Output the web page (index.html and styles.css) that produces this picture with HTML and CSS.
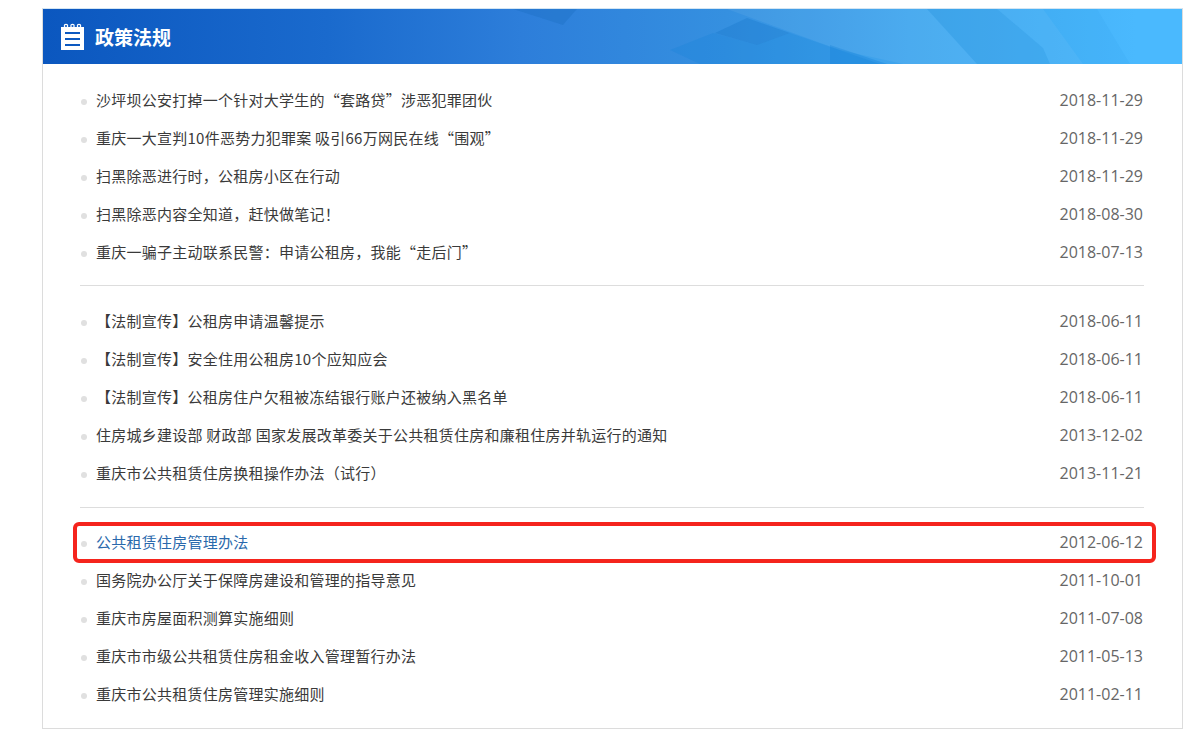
FILE: index.html
```html
<!DOCTYPE html>
<html lang="zh-CN">
<head>
<meta charset="utf-8">
<title>政策法规</title>
<link rel="stylesheet" href="styles.css">
</head>
<body>
<section class="panel">
  <header class="panel-head">
    <svg class="head-art" viewBox="0 0 1139 55" aria-hidden="true">
      <polygon points="470,0 534,0 520,16" fill="#1a6cc0" opacity=".35"/>
      <polygon points="684,0 1000,0 1040,55 860,55 797,41" fill="#ffffff" opacity=".06"/>
      <polygon points="704,9 672,24 714,36 747,24" fill="#0f6fc4" opacity=".28"/>
      <polygon points="627,41 670,24 714,36 747,24 837,55 657,55" fill="#0f7fd8" opacity=".22"/>
      <polygon points="787,36 844,55 787,55" fill="#0f7fd8" opacity=".3"/>
      <polygon points="884,0 954,0 1000,39 1007,55 934,55" fill="#1e8fdc" opacity=".3"/>
      <polygon points="954,0 1054,0 1087,55 1007,55 1000,39" fill="#2a9ae6" opacity=".12"/>
    </svg>
    <svg class="head-icon" viewBox="0 0 23 27" aria-hidden="true">
      <path class="icon-sheet" fill-rule="evenodd" d="M0 4h23v23H0zM4 9v2h15V9zm0 6v2h15v-2zm0 6v2h15v-2z"/>
      <circle class="icon-ring" cx="5" cy="3" r="1.7"/>
      <circle class="icon-ring" cx="11.5" cy="3" r="1.7"/>
      <circle class="icon-ring" cx="18" cy="3" r="1.7"/>
    </svg>
    <h2 class="head-title">政策法规</h2>
  </header>
  <div class="panel-body">
    <ul class="news-group">
      <li class="news-row"><a class="news-title">沙坪坝公安打掉一个针对大学生的“套路贷”涉恶犯罪团伙</a><span class="news-date">2018-11-29</span></li>
      <li class="news-row"><a class="news-title">重庆一大宣判10件恶势力犯罪案 吸引66万网民在线“围观”</a><span class="news-date">2018-11-29</span></li>
      <li class="news-row"><a class="news-title">扫黑除恶进行时，公租房小区在行动</a><span class="news-date">2018-11-29</span></li>
      <li class="news-row"><a class="news-title">扫黑除恶内容全知道，赶快做笔记！</a><span class="news-date">2018-08-30</span></li>
      <li class="news-row"><a class="news-title">重庆一骗子主动联系民警：申请公租房，我能“走后门”</a><span class="news-date">2018-07-13</span></li>
    </ul>
    <ul class="news-group">
      <li class="news-row"><a class="news-title">【法制宣传】公租房申请温馨提示</a><span class="news-date">2018-06-11</span></li>
      <li class="news-row"><a class="news-title">【法制宣传】安全住用公租房10个应知应会</a><span class="news-date">2018-06-11</span></li>
      <li class="news-row"><a class="news-title">【法制宣传】公租房住户欠租被冻结银行账户还被纳入黑名单</a><span class="news-date">2018-06-11</span></li>
      <li class="news-row"><a class="news-title">住房城乡建设部 财政部 国家发展改革委关于公共租赁住房和廉租住房并轨运行的通知</a><span class="news-date">2013-12-02</span></li>
      <li class="news-row"><a class="news-title">重庆市公共租赁住房换租操作办法（试行）</a><span class="news-date">2013-11-21</span></li>
    </ul>
    <ul class="news-group">
      <li class="news-row is-marked"><a class="news-title is-active">公共租赁住房管理办法</a><span class="news-date">2012-06-12</span></li>
      <li class="news-row"><a class="news-title">国务院办公厅关于保障房建设和管理的指导意见</a><span class="news-date">2011-10-01</span></li>
      <li class="news-row"><a class="news-title">重庆市房屋面积测算实施细则</a><span class="news-date">2011-07-08</span></li>
      <li class="news-row"><a class="news-title">重庆市市级公共租赁住房租金收入管理暂行办法</a><span class="news-date">2011-05-13</span></li>
      <li class="news-row"><a class="news-title">重庆市公共租赁住房管理实施细则</a><span class="news-date">2011-02-11</span></li>
    </ul>
  </div>
</section>
</body>
</html>
```
FILE: styles.css
```css
*, *::before, *::after { box-sizing: border-box; }
html, body { margin: 0; padding: 0; background: #fff; }
body {
  padding: 8px 17px 0 42px;
  font-family: "Noto Sans CJK SC", "Noto Sans", sans-serif;
  color: #333;
}
.panel {
  width: 1141px;
  height: 721px;
  border: 1px solid #dcdcdc;
  border-top-color: #d3e5f3;
  display: flex;
  flex-direction: column;
}
.panel-head {
  position: relative;
  height: 55px;
  flex: none;
  padding-left: 18px;
  display: flex;
  align-items: center;
  gap: 11px;
  overflow: hidden;
  background: linear-gradient(90deg, #0b57bf 0%, #1a6acd 25%, #2d7eda 42%, #3590e0 60%, #40a6ee 76%, #4ab9fe 96%);
}
.head-art { position: absolute; inset: 0; width: 100%; height: 100%; }
.head-icon { position: relative; width: 23px; height: 27px; flex: none; margin-top: -1px; }
.icon-sheet { fill: #fff; }
.icon-ring { fill: none; stroke: #fff; stroke-width: 1.2; }
.head-title {
  position: relative;
  margin: 0;
  font-size: 19px;
  font-weight: 700;
  line-height: 26px;
  color: #fff;
}
.panel-body {
  padding: 16px 38px 0 37px;
  display: flex;
  flex-direction: column;
}
.news-group {
  list-style: none;
  margin: 0 0 15px;
  padding: 0 0 15px;
  border-bottom: 1px solid #dddddd;
}
.news-group:nth-child(2) { margin-bottom: 14px; padding-bottom: 16px; }
.news-group:last-child { border-bottom: 0; margin-bottom: 0; padding-bottom: 0; }
.news-row {
  position: relative;
  height: 38px;
  padding: 0 1px 0 16px;
  display: flex;
  align-items: center;
  justify-content: space-between;
  font-size: 15px;
}
.news-row::before {
  content: "";
  position: absolute;
  left: 1px;
  top: 19px;
  width: 6px;
  height: 6px;
  border-radius: 50%;
  background: #e0e0e0;
}
.news-title { color: #3a3a3a; white-space: nowrap; letter-spacing: 0.25px; }
.news-title.is-active { color: #2a69ac; }
.news-date {
  padding-top: 2px;
  font-family: "Open Sans", "Noto Sans", sans-serif;
  font-size: 16px;
  color: #666;
}
.is-marked::after {
  content: "";
  position: absolute;
  left: -7px;
  right: -12px;
  top: 0;
  height: 41px;
  border: 4px solid #f5241d;
  border-radius: 6px;
  pointer-events: none;
}
```
